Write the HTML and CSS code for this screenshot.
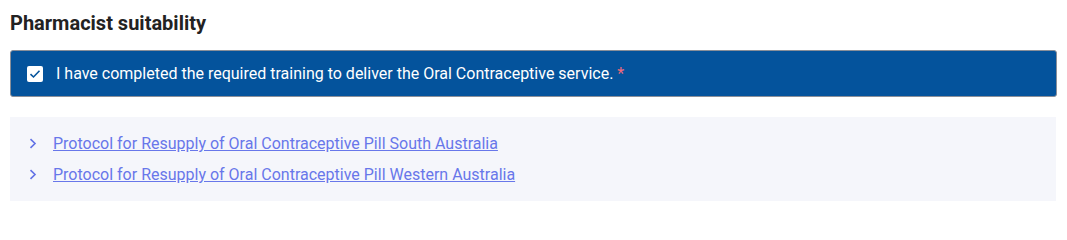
FILE: index.html
```html
<!DOCTYPE html>
<html>
<head>
<meta charset="utf-8">
<link rel="stylesheet" href="styles.css">
</head>
<body>
<section class="section">
  <h2 class="title">Pharmacist suitability</h2>
  <label class="confirm">
    <span class="box">
      <svg width="12" height="10" viewBox="0 0 12 10"><path d="M1.5 5.2 L4.5 8 L10.5 1.8" fill="none" stroke="#04539c" stroke-width="1.6"/></svg>
    </span>
    <span class="confirm-text">I have completed the required training to deliver the Oral Contraceptive service. <span class="req">*</span></span>
  </label>
  <div class="links">
    <div class="link-row">
      <svg class="chev" width="8" height="11" viewBox="0 0 8 11"><path d="M1.5 1.2 L6 5.5 L1.5 9.8" fill="none" stroke="#6272e6" stroke-width="1.6"/></svg>
      <a href="#" class="link">Protocol for Resupply of Oral Contraceptive Pill South Australia</a>
    </div>
    <div class="link-row">
      <svg class="chev" width="8" height="11" viewBox="0 0 8 11"><path d="M1.5 1.2 L6 5.5 L1.5 9.8" fill="none" stroke="#6272e6" stroke-width="1.6"/></svg>
      <a href="#" class="link">Protocol for Resupply of Oral Contraceptive Pill Western Australia</a>
    </div>
  </div>
</section>
</body>
</html>
```
FILE: styles.css
```css
html, body { margin: 0; padding: 0; background: #fff; }
body { font-family: Roboto, "Liberation Sans", sans-serif; }
.section { padding: 9px 10px 0 10px; }
.title { margin: 0; font-size: 20px; font-weight: 700; color: #222; line-height: 28px; }
.confirm {
  margin-top: 13px;
  display: flex; align-items: center; gap: 13px;
  background: #04539c; border: 1px solid #8a8f99; border-radius: 3px;
  padding: 0 16px; box-sizing: border-box; height: 47px;
}
.box { width: 16px; height: 16px; background: #fff; border-radius: 2px; display: flex; align-items: center; justify-content: center; flex: none; }
.confirm-text { color: #fff; font-size: 16px; }
.req { color: #f06a7a; }
.links { margin-top: 20px; margin-right: 1px; background: #f5f6fb; padding: 11px 19px 14px 19px; height: 84px; box-sizing: border-box; }
.link-row { display: flex; align-items: center; gap: 16px; height: 31px; }
.chev { flex: none; }
.link { color: #6877ea; font-size: 16px; text-decoration: underline; }
```
